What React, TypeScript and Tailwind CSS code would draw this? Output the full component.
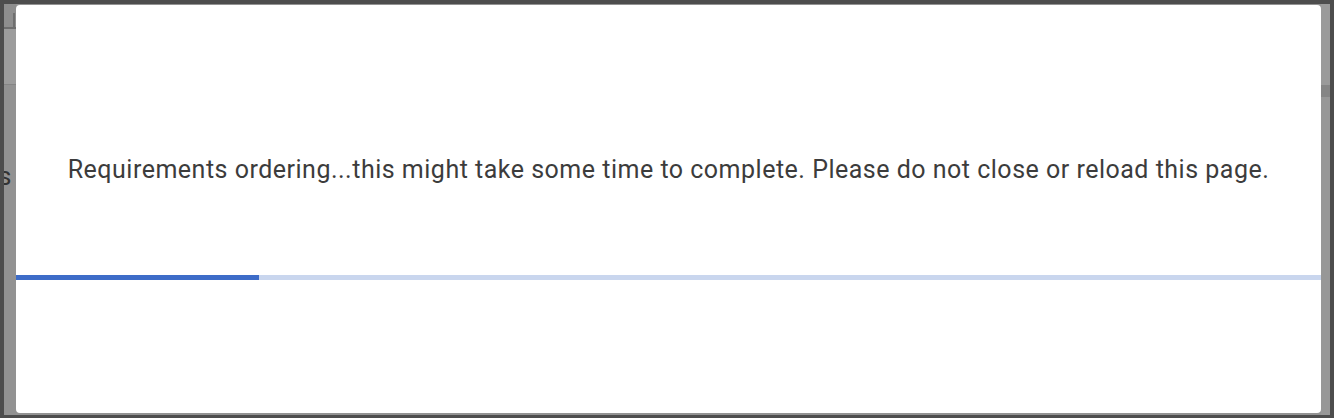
import React from "react";

export default function App() {
  return (
    <div className="w-[1334px] h-[418px] bg-[#4d4d4d] pt-[4px] pl-[4px] pr-[4px] pb-[3px] overflow-hidden" style={{ fontFamily: "Roboto, 'Liberation Sans', sans-serif" }}>
      <div className="flex h-full bg-[#939393]">
        <div className="w-[12px] flex flex-col overflow-hidden">
          <div className="h-[25px] bg-[#8e8e8e] border-b-2 border-[#6e6e6e] flex justify-end">
            <div className="w-[2px] h-[16px] mt-[9px] mr-[1px] bg-[#6f6f6f]" />
          </div>
          <div className="h-[56px] bg-[#9c9c9c] border-b border-[#858585]" />
          <div className="flex-1 bg-[#929292]">
            <div className="mt-[77px] -ml-[6px] text-[26px] leading-[28px] text-[#333333]">s</div>
          </div>
        </div>
        <div className="flex-1 mt-[1px] mb-[2px] bg-white rounded-[4px] flex flex-col">
          <p className="pt-[150px] text-center text-[25px] leading-[30px] text-[#3c3c3c] tracking-[0.5px]">
            Requirements ordering...this might take some time to complete. Please do not close or reload this page.
          </p>
          <div className="mt-[90px] h-[5px] w-full bg-[#c9d6ee] flex">
            <div className="w-[243px] h-full bg-[#3d6cc8]" />
          </div>
        </div>
        <div className="w-[9px] flex flex-col">
          <div className="h-[81px] bg-[#9a9a9a]" />
          <div className="h-[12px] bg-[#858585]" />
          <div className="flex-1 bg-[#979797]" />
        </div>
      </div>
    </div>
  );
}
